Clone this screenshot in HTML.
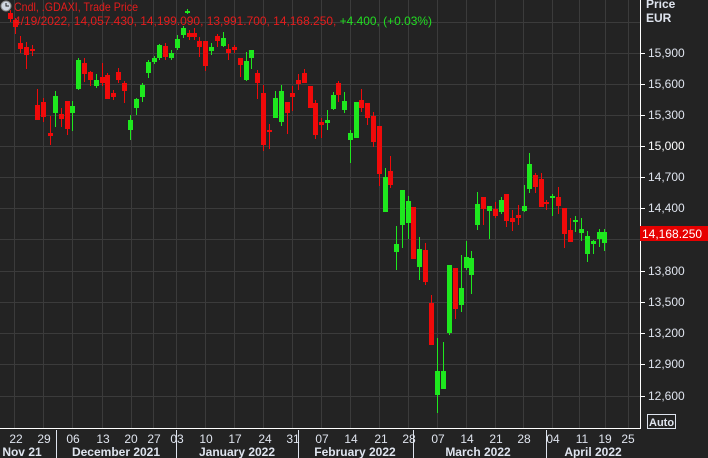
<!DOCTYPE html>
<html><head><meta charset="utf-8"><style>
html,body{margin:0;padding:0;background:#232323;}
svg{display:block;font-family:"Liberation Sans",sans-serif;}
</style></head><body>
<svg width="708" height="458" viewBox="0 0 708 458" xmlns="http://www.w3.org/2000/svg">
<rect width="708" height="458" fill="#232323"/>
<g stroke="#3b3b3b" stroke-width="1">
<line x1="0" y1="22.5" x2="640" y2="22.5"/><line x1="0" y1="53.5" x2="640" y2="53.5"/><line x1="0" y1="84.5" x2="640" y2="84.5"/><line x1="0" y1="115.5" x2="640" y2="115.5"/><line x1="0" y1="146.5" x2="640" y2="146.5"/><line x1="0" y1="177.5" x2="640" y2="177.5"/><line x1="0" y1="208.5" x2="640" y2="208.5"/><line x1="0" y1="239.5" x2="640" y2="239.5"/><line x1="0" y1="271.5" x2="640" y2="271.5"/><line x1="0" y1="302.5" x2="640" y2="302.5"/><line x1="0" y1="333.5" x2="640" y2="333.5"/><line x1="0" y1="364.5" x2="640" y2="364.5"/><line x1="0" y1="396.5" x2="640" y2="396.5"/>
<line x1="14.5" y1="0" x2="14.5" y2="428"/><line x1="43.5" y1="0" x2="43.5" y2="428"/><line x1="72.5" y1="0" x2="72.5" y2="428"/><line x1="102.5" y1="0" x2="102.5" y2="428"/><line x1="131.5" y1="0" x2="131.5" y2="428"/><line x1="153.5" y1="0" x2="153.5" y2="428"/><line x1="176.5" y1="0" x2="176.5" y2="428"/><line x1="205.5" y1="0" x2="205.5" y2="428"/><line x1="234.5" y1="0" x2="234.5" y2="428"/><line x1="263.5" y1="0" x2="263.5" y2="428"/><line x1="292.5" y1="0" x2="292.5" y2="428"/><line x1="321.5" y1="0" x2="321.5" y2="428"/><line x1="350.5" y1="0" x2="350.5" y2="428"/><line x1="379.5" y1="0" x2="379.5" y2="428"/><line x1="408.5" y1="0" x2="408.5" y2="428"/><line x1="437.5" y1="0" x2="437.5" y2="428"/><line x1="466.5" y1="0" x2="466.5" y2="428"/><line x1="495.5" y1="0" x2="495.5" y2="428"/><line x1="523.5" y1="0" x2="523.5" y2="428"/><line x1="552.5" y1="0" x2="552.5" y2="428"/><line x1="579.5" y1="0" x2="579.5" y2="428"/><line x1="605.5" y1="0" x2="605.5" y2="428"/><line x1="628.5" y1="0" x2="628.5" y2="428"/>
</g>
<g fill="#f00a0a">
<rect x="10" y="10" width="1" height="12"/><rect x="8" y="13" width="5" height="6"/>
<rect x="15" y="18" width="1" height="16"/><rect x="13" y="20" width="5" height="7"/>
<rect x="20" y="36" width="1" height="17"/><rect x="18" y="43" width="5" height="6"/>
<rect x="26" y="42" width="1" height="27"/><rect x="24" y="47" width="5" height="8"/>
<rect x="32" y="45" width="1" height="11"/><rect x="30" y="49" width="5" height="2"/>
<rect x="37" y="89" width="1" height="31"/><rect x="35" y="105" width="5" height="15"/>
<rect x="43" y="98" width="1" height="24"/><rect x="41" y="102" width="5" height="15"/>
<rect x="50" y="116" width="1" height="29"/><rect x="48" y="133" width="5" height="3"/>
<rect x="61" y="108" width="1" height="19"/><rect x="59" y="114" width="5" height="5"/>
<rect x="67" y="101" width="1" height="34"/><rect x="65" y="101" width="5" height="28"/>
<rect x="84" y="58" width="1" height="24"/><rect x="82" y="63" width="5" height="11"/>
<rect x="90" y="71" width="1" height="15"/><rect x="88" y="72" width="5" height="8"/>
<rect x="102" y="63" width="1" height="23"/><rect x="100" y="77" width="5" height="6"/>
<rect x="107" y="73" width="1" height="26"/><rect x="105" y="75" width="5" height="24"/>
<rect x="113" y="90" width="1" height="10"/><rect x="111" y="93" width="5" height="4"/>
<rect x="118" y="68" width="1" height="15"/><rect x="116" y="72" width="5" height="8"/>
<rect x="124" y="81" width="1" height="22"/><rect x="122" y="83" width="5" height="8"/>
<rect x="165" y="43" width="1" height="17"/><rect x="163" y="46" width="5" height="11"/>
<rect x="189" y="30" width="1" height="10"/><rect x="187" y="33" width="5" height="4"/>
<rect x="194" y="28" width="1" height="12"/><rect x="192" y="33" width="5" height="4"/>
<rect x="199" y="37" width="1" height="20"/><rect x="197" y="41" width="5" height="6"/>
<rect x="205" y="41" width="1" height="30"/><rect x="203" y="41" width="5" height="25"/>
<rect x="217" y="34" width="1" height="13"/><rect x="215" y="36" width="5" height="5"/>
<rect x="228" y="44" width="1" height="16"/><rect x="226" y="49" width="5" height="4"/>
<rect x="234" y="45" width="1" height="8"/><rect x="232" y="47" width="5" height="3"/>
<rect x="240" y="58" width="1" height="19"/><rect x="238" y="58" width="5" height="7"/>
<rect x="257" y="70" width="1" height="29"/><rect x="255" y="73" width="5" height="10"/>
<rect x="263" y="85" width="1" height="66"/><rect x="261" y="93" width="5" height="52"/>
<rect x="269" y="124" width="1" height="25"/><rect x="267" y="130" width="5" height="2"/>
<rect x="287" y="102" width="1" height="32"/><rect x="285" y="102" width="5" height="11"/>
<rect x="292" y="86" width="1" height="25"/><rect x="290" y="93" width="5" height="4"/>
<rect x="298" y="74" width="1" height="16"/><rect x="296" y="80" width="5" height="4"/>
<rect x="304" y="69" width="1" height="14"/><rect x="302" y="73" width="5" height="10"/>
<rect x="310" y="86" width="1" height="22"/><rect x="308" y="86" width="5" height="22"/>
<rect x="315" y="100" width="1" height="39"/><rect x="313" y="103" width="5" height="32"/>
<rect x="321" y="118" width="1" height="20"/><rect x="319" y="122" width="5" height="3"/>
<rect x="338" y="81" width="1" height="21"/><rect x="336" y="83" width="5" height="12"/>
<rect x="361" y="89" width="1" height="23"/><rect x="359" y="100" width="5" height="8"/>
<rect x="367" y="103" width="1" height="22"/><rect x="365" y="103" width="5" height="15"/>
<rect x="373" y="112" width="1" height="35"/><rect x="371" y="116" width="5" height="26"/>
<rect x="379" y="126" width="1" height="60"/><rect x="377" y="126" width="5" height="48"/>
<rect x="390" y="156" width="1" height="32"/><rect x="388" y="171" width="5" height="14"/>
<rect x="413" y="207" width="1" height="52"/><rect x="411" y="207" width="5" height="52"/>
<rect x="425" y="243" width="1" height="42"/><rect x="423" y="250" width="5" height="32"/>
<rect x="431" y="295" width="1" height="50"/><rect x="429" y="303" width="5" height="42"/>
<rect x="455" y="268" width="1" height="51"/><rect x="453" y="268" width="5" height="41"/>
<rect x="483" y="197" width="1" height="28"/><rect x="481" y="197" width="5" height="12"/>
<rect x="495" y="202" width="1" height="16"/><rect x="493" y="209" width="5" height="7"/>
<rect x="506" y="194" width="1" height="33"/><rect x="504" y="194" width="5" height="27"/>
<rect x="512" y="210" width="1" height="21"/><rect x="510" y="218" width="5" height="4"/>
<rect x="518" y="205" width="1" height="20"/><rect x="516" y="215" width="5" height="3"/>
<rect x="535" y="173" width="1" height="20"/><rect x="533" y="175" width="5" height="12"/>
<rect x="541" y="173" width="1" height="34"/><rect x="539" y="179" width="5" height="28"/>
<rect x="546" y="200" width="1" height="10"/><rect x="544" y="202" width="5" height="2"/>
<rect x="558" y="187" width="1" height="27"/><rect x="556" y="197" width="5" height="9"/>
<rect x="564" y="208" width="1" height="40"/><rect x="562" y="208" width="5" height="26"/>
<rect x="570" y="218" width="1" height="24"/><rect x="568" y="230" width="5" height="12"/>
</g>
<g fill="#1ee81e">
<rect x="55" y="91" width="1" height="36"/><rect x="53" y="96" width="5" height="17"/>
<rect x="72" y="101" width="1" height="30"/><rect x="70" y="106" width="5" height="7"/>
<rect x="78" y="58" width="1" height="32"/><rect x="76" y="60" width="5" height="29"/>
<rect x="96" y="74" width="1" height="14"/><rect x="94" y="80" width="5" height="6"/>
<rect x="130" y="115" width="1" height="25"/><rect x="128" y="120" width="5" height="10"/>
<rect x="136" y="98" width="1" height="17"/><rect x="134" y="99" width="5" height="9"/>
<rect x="142" y="83" width="1" height="19"/><rect x="140" y="85" width="5" height="12"/>
<rect x="148" y="60" width="1" height="18"/><rect x="146" y="62" width="5" height="11"/>
<rect x="154" y="56" width="1" height="8"/><rect x="152" y="58" width="5" height="4"/>
<rect x="159" y="44" width="1" height="16"/><rect x="157" y="45" width="5" height="13"/>
<rect x="171" y="50" width="1" height="10"/><rect x="169" y="53" width="5" height="5"/>
<rect x="177" y="35" width="1" height="15"/><rect x="175" y="39" width="5" height="9"/>
<rect x="183" y="26" width="1" height="12"/><rect x="181" y="28" width="5" height="7"/>
<rect x="187" y="9" width="1" height="5"/><rect x="185" y="11" width="5" height="2"/>
<rect x="211" y="43" width="1" height="12"/><rect x="209" y="47" width="5" height="4"/>
<rect x="223" y="32" width="1" height="15"/><rect x="221" y="38" width="5" height="8"/>
<rect x="246" y="52" width="1" height="29"/><rect x="244" y="61" width="5" height="19"/>
<rect x="251" y="50" width="1" height="19"/><rect x="249" y="50" width="5" height="8"/>
<rect x="275" y="91" width="1" height="27"/><rect x="273" y="98" width="5" height="20"/>
<rect x="281" y="85" width="1" height="41"/><rect x="279" y="91" width="5" height="31"/>
<rect x="327" y="110" width="1" height="20"/><rect x="325" y="120" width="5" height="3"/>
<rect x="333" y="92" width="1" height="18"/><rect x="331" y="95" width="5" height="14"/>
<rect x="344" y="92" width="1" height="21"/><rect x="342" y="101" width="5" height="9"/>
<rect x="350" y="130" width="1" height="33"/><rect x="348" y="133" width="5" height="7"/>
<rect x="356" y="102" width="1" height="36"/><rect x="354" y="102" width="5" height="36"/>
<rect x="385" y="168" width="1" height="44"/><rect x="383" y="177" width="5" height="35"/>
<rect x="396" y="226" width="1" height="44"/><rect x="394" y="244" width="5" height="8"/>
<rect x="402" y="190" width="1" height="58"/><rect x="400" y="190" width="5" height="35"/>
<rect x="408" y="196" width="1" height="43"/><rect x="406" y="201" width="5" height="22"/>
<rect x="419" y="237" width="1" height="43"/><rect x="417" y="249" width="5" height="18"/>
<rect x="437" y="338" width="1" height="75"/><rect x="435" y="371" width="5" height="24"/>
<rect x="443" y="342" width="1" height="47"/><rect x="441" y="371" width="5" height="18"/>
<rect x="449" y="265" width="1" height="70"/><rect x="447" y="265" width="5" height="68"/>
<rect x="461" y="255" width="1" height="57"/><rect x="459" y="288" width="5" height="17"/>
<rect x="466" y="241" width="1" height="29"/><rect x="464" y="257" width="5" height="11"/>
<rect x="471" y="251" width="1" height="43"/><rect x="469" y="258" width="5" height="17"/>
<rect x="477" y="192" width="1" height="38"/><rect x="475" y="204" width="5" height="21"/>
<rect x="489" y="206" width="1" height="33"/><rect x="487" y="206" width="5" height="5"/>
<rect x="501" y="197" width="1" height="17"/><rect x="499" y="200" width="5" height="12"/>
<rect x="524" y="185" width="1" height="27"/><rect x="522" y="206" width="5" height="5"/>
<rect x="529" y="153" width="1" height="40"/><rect x="527" y="164" width="5" height="25"/>
<rect x="552" y="194" width="1" height="22"/><rect x="550" y="196" width="5" height="2"/>
<rect x="575" y="216" width="1" height="16"/><rect x="573" y="220" width="5" height="2"/>
<rect x="581" y="218" width="1" height="23"/><rect x="579" y="229" width="5" height="4"/>
<rect x="587" y="231" width="1" height="31"/><rect x="585" y="236" width="5" height="18"/>
<rect x="593" y="240" width="1" height="14"/><rect x="591" y="241" width="5" height="3"/>
<rect x="599" y="229" width="1" height="18"/><rect x="597" y="232" width="5" height="7"/>
<rect x="604" y="229" width="1" height="22"/><rect x="602" y="232" width="5" height="11"/>
</g>
<line x1="640.5" y1="0" x2="640.5" y2="428" stroke="#fff"/>
<line x1="0" y1="428.5" x2="641" y2="428.5" stroke="#fff"/>
<g stroke="#fff">
<line x1="641" y1="53.5" x2="645" y2="53.5"/><line x1="641" y1="84.5" x2="645" y2="84.5"/><line x1="641" y1="115.5" x2="645" y2="115.5"/><line x1="641" y1="146.5" x2="645" y2="146.5"/><line x1="641" y1="177.5" x2="645" y2="177.5"/><line x1="641" y1="208.5" x2="645" y2="208.5"/><line x1="641" y1="271.5" x2="645" y2="271.5"/><line x1="641" y1="302.5" x2="645" y2="302.5"/><line x1="641" y1="333.5" x2="645" y2="333.5"/><line x1="641" y1="364.5" x2="645" y2="364.5"/><line x1="641" y1="396.5" x2="645" y2="396.5"/>
</g>
<g fill="#dfe4ee" font-size="12">
<text x="646" y="8" font-weight="bold">Price</text>
<text x="646" y="22" font-weight="bold">EUR</text>
<text x="648" y="57">15,900</text><text x="648" y="88">15,600</text><text x="648" y="119">15,300</text><text x="648" y="150" fill="#fff">15,000</text><text x="648" y="181">14,700</text><text x="648" y="212">14,400</text><text x="648" y="275">13,800</text><text x="648" y="306">13,500</text><text x="648" y="337">13,200</text><text x="648" y="368">12,900</text><text x="648" y="400">12,600</text>
</g>
<rect x="640" y="226" width="68" height="15" fill="#e60000"/>
<text x="642" y="238" fill="#fff" font-size="12">14,168.250</text>
<rect x="647.5" y="414.5" width="28" height="14" fill="none" stroke="#dfe4ee"/>
<text x="649" y="426" fill="#dfe4ee" font-size="11" font-weight="bold">Auto</text>
<g fill="#dfe4ee" font-size="12" text-anchor="middle">
<text x="16" y="443">22</text><text x="44" y="443">29</text><text x="73" y="443">06</text><text x="103" y="443">13</text><text x="131" y="443">20</text><text x="154" y="443">27</text><text x="177" y="443">03</text><text x="206" y="443">10</text><text x="235" y="443">17</text><text x="265" y="443">24</text><text x="293" y="443">31</text><text x="322" y="443">07</text><text x="351" y="443">14</text><text x="381" y="443">21</text><text x="409" y="443">28</text><text x="438" y="443">07</text><text x="467" y="443">14</text><text x="496" y="443">21</text><text x="524" y="443">28</text><text x="553" y="443">04</text><text x="582" y="443">11</text><text x="605" y="443">19</text><text x="628" y="443">25</text>
<g font-weight="bold"><text x="22" y="456">Nov 21</text><text x="116" y="456">December 2021</text><text x="237" y="456">January 2022</text><text x="355" y="456">February 2022</text><text x="478" y="456">March 2022</text><text x="593" y="456">April 2022</text></g>
</g>
<g stroke="#dfe4ee"><line x1="56.5" y1="430" x2="56.5" y2="458"/><line x1="176.5" y1="430" x2="176.5" y2="458"/><line x1="298.5" y1="430" x2="298.5" y2="458"/><line x1="413.5" y1="430" x2="413.5" y2="458"/><line x1="546.5" y1="430" x2="546.5" y2="458"/></g>
<circle cx="6" cy="6" r="5" fill="#cfd6e0" stroke="#888"/><path d="M6 3V6H9" stroke="#222" fill="none"/>
<text x="14" y="11" fill="#e51c1c" font-size="12" textLength="124" lengthAdjust="spacingAndGlyphs">Cndl, .GDAXI, Trade Price</text>
<text x="14" y="25" fill="#e51c1c" font-size="12" textLength="418" lengthAdjust="spacingAndGlyphs">4/19/2022, 14,057.430, 14,199.090, 13,991.700, 14,168.250, <tspan fill="#22dd22">+4.400, (+0.03%)</tspan></text>
</svg>
</body></html>
